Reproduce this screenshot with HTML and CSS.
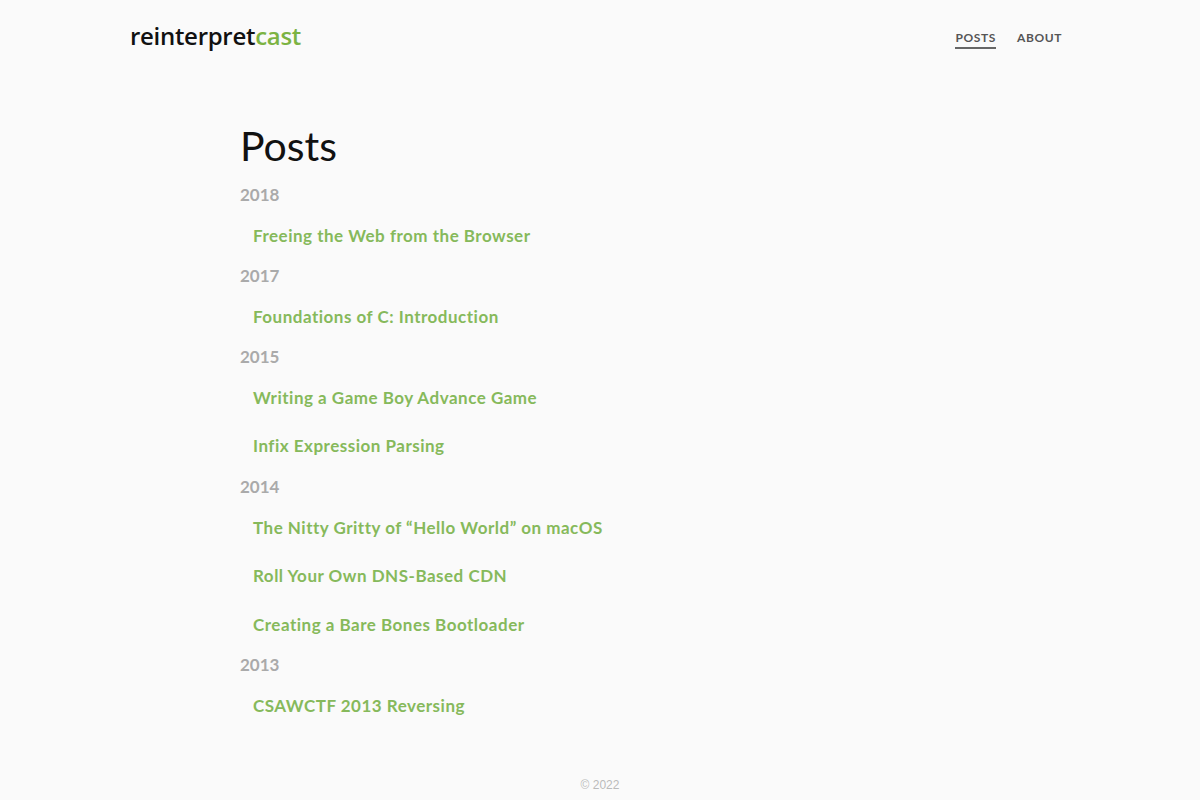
FILE: index.html
```html
<!DOCTYPE html>
<html lang="en">
<head>
  <meta charset="UTF-8">
  <meta name="viewport" content="width=device-width, initial-scale=1.0">
  <title>Posts - reinterpretcast</title>
  <link rel="stylesheet" href="styles.css">
</head>
<body>
  <header class="site-header">
    <a class="logo" href="#">reinterpret<span class="logo-accent">cast</span></a>
    <nav class="nav">
      <a class="nav-link active" href="#">Posts</a>
      <a class="nav-link" href="#">About</a>
    </nav>
  </header>

  <main class="content">
    <h1 class="page-title">Posts</h1>

    <h3 class="year">2018</h3>
    <ul class="post-list">
      <li><a href="#">Freeing the Web from the Browser</a></li>
    </ul>

    <h3 class="year">2017</h3>
    <ul class="post-list">
      <li><a href="#">Foundations of C: Introduction</a></li>
    </ul>

    <h3 class="year">2015</h3>
    <ul class="post-list">
      <li><a href="#">Writing a Game Boy Advance Game</a></li>
      <li><a href="#">Infix Expression Parsing</a></li>
    </ul>

    <h3 class="year">2014</h3>
    <ul class="post-list">
      <li><a href="#">The Nitty Gritty of “Hello World” on macOS</a></li>
      <li><a href="#">Roll Your Own DNS-Based CDN</a></li>
      <li><a href="#">Creating a Bare Bones Bootloader</a></li>
    </ul>

    <h3 class="year">2013</h3>
    <ul class="post-list">
      <li><a href="#">CSAWCTF 2013 Reversing</a></li>
    </ul>
  </main>

  <footer class="footer">© 2022</footer>
</body>
</html>
```

FILE: styles.css
```css
* {
  box-sizing: border-box;
}

body {
  background-color: #fafafa;
  font-family: Lato, "Noto Sans", sans-serif;
  color: #222;
  margin: 0;
}

a {
  text-decoration: none;
}

.site-header {
  width: 940px;
  margin: 0 auto;
  height: 74px;
  display: flex;
  justify-content: space-between;
  align-items: center;
}

.logo {
  font-family: "Open Sans", sans-serif;
  font-size: 24px;
  font-weight: 600;
  color: #111;
  letter-spacing: -0.3px;
  margin-top: -4px;
}

.logo-accent {
  color: #7cb342;
}

.nav {
  display: flex;
  gap: 21px;
  margin-right: 8px;
  margin-top: 4px;
}

.nav-link {
  font-size: 12px;
  font-weight: 700;
  text-transform: uppercase;
  letter-spacing: 0.6px;
  color: #555;
  padding: 0 0 2px;
  border-bottom: 2px solid transparent;
}

.nav-link.active {
  border-bottom-color: #666;
}

.content {
  width: 720px;
  margin: 0 auto;
  padding: 44px 0 36px;
}

.page-title {
  font-size: 41px;
  font-weight: 400;
  color: #111;
  margin: 0 0 11px;
  line-height: 56px;
}

.year {
  font-size: 17px;
  font-weight: 700;
  color: #aaa;
  line-height: 20px;
  margin: 6.35px 0;
}

.post-list {
  list-style: none;
  margin: 0;
  padding: 0 0 0 13px;
}

.post-list li {
  padding: 14.25px 0;
  line-height: 20px;
}

.post-list a {
  font-size: 17px;
  font-weight: 700;
  letter-spacing: 0.5px;
  color: #86b95b;
}

.footer {
  text-align: center;
  font-family: "Liberation Sans", Arial, sans-serif;
  font-size: 12px;
  color: #bbb;
  padding: 12px 0 10px;
}
```
